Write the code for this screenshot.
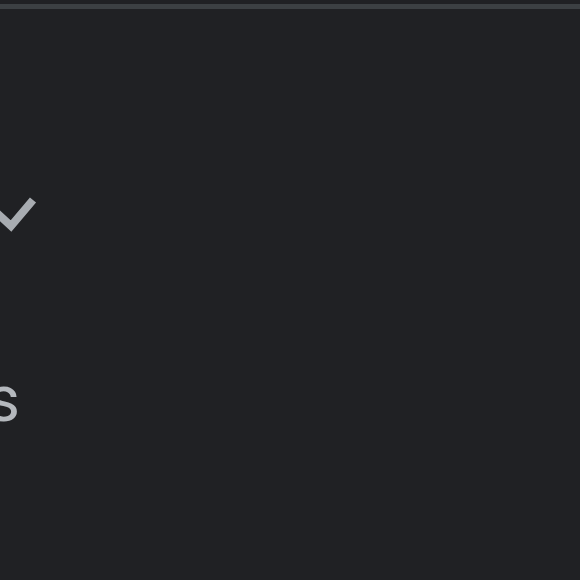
export default function App() {
  return (
    <div className="w-[580px] h-[580px] bg-[#202124] overflow-hidden" style={{ fontFamily: "Roboto, 'Liberation Sans', sans-serif" }}>
      <div className="h-[4px] bg-[#202124]" />
      <div className="h-[5px] bg-[#3c4043]" />
      <svg className="block mt-[181px] -ml-[20px]" width="60" height="50" viewBox="0 0 60 50">
        <polyline points="8,15 31,36 53,10" fill="none" stroke="#a8acb1" strokeWidth="8" strokeLinejoin="miter" />
      </svg>
      <div className="mt-[128px] -ml-[13px] text-[64px] leading-[64px] text-[#b4b8bd]">s</div>
    </div>
  );
}
